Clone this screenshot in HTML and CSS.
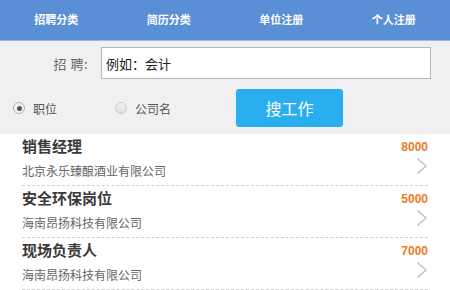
FILE: index.html
```html
<!DOCTYPE html>
<html lang="zh">
<head>
<meta charset="utf-8">
<link rel="stylesheet" href="styles.css">
</head>
<body>
<nav class="nav">
  <a class="nav-item">招聘分类</a>
  <a class="nav-item">简历分类</a>
  <a class="nav-item">单位注册</a>
  <a class="nav-item">个人注册</a>
</nav>
<section class="search">
  <div class="search-row">
    <label class="search-label">招 聘:</label>
    <div class="search-input">例如：会计</div>
  </div>
  <div class="option-row">
    <div class="option"><span class="radio checked"></span><span>职位</span></div>
    <div class="option"><span class="radio"></span><span>公司名</span></div>
    <button class="btn">搜工作</button>
  </div>
</section>
<ul class="list">
  <li class="job">
    <div class="job-main"><div class="job-title">销售经理</div><div class="job-company">北京永乐臻酿酒业有限公司</div></div>
    <div class="job-side"><span class="salary">8000</span><svg class="chev" width="12" height="18" viewBox="0 0 12 18"><path d="M1.5 1.5 L10 9 L1.5 16.5" fill="none" stroke="#c4c4c4" stroke-width="1.6"/></svg></div>
  </li>
  <li class="job">
    <div class="job-main"><div class="job-title">安全环保岗位</div><div class="job-company">海南昂扬科技有限公司</div></div>
    <div class="job-side"><span class="salary">5000</span><svg class="chev" width="12" height="18" viewBox="0 0 12 18"><path d="M1.5 1.5 L10 9 L1.5 16.5" fill="none" stroke="#c4c4c4" stroke-width="1.6"/></svg></div>
  </li>
  <li class="job">
    <div class="job-main"><div class="job-title">现场负责人</div><div class="job-company">海南昂扬科技有限公司</div></div>
    <div class="job-side"><span class="salary">7000</span><svg class="chev" width="12" height="18" viewBox="0 0 12 18"><path d="M1.5 1.5 L10 9 L1.5 16.5" fill="none" stroke="#c4c4c4" stroke-width="1.6"/></svg></div>
  </li>
</ul>
</body>
</html>
```
FILE: styles.css
```css
* { box-sizing: border-box; }
html, body { margin: 0; padding: 0; }
body {
  width: 450px;
  height: 290px;
  overflow: hidden;
  background: #fff;
  font-family: "Noto Sans CJK SC", "Noto Sans", sans-serif;
  color: #333;
}
.nav {
  display: grid;
  grid-template-columns: repeat(4, 1fr);
  height: 41px;
  background: #5b8fd5;
  border-bottom: 1px solid #9bbbe6;
}
.nav-item {
  display: flex;
  align-items: center;
  justify-content: center;
  color: #fff;
  font-size: 11px;
  font-weight: 700;
  padding-bottom: 2px;
}
.search {
  background: #f0f0f0;
  height: 93px;
  padding-top: 6px;
}
.search-row {
  display: flex;
  align-items: center;
}
.search-label {
  width: 88px;
  text-align: right;
  font-size: 13px;
  color: #666;
  letter-spacing: 0.5px;
}
.search-input {
  margin-left: 13px;
  width: 330px;
  height: 32px;
  background: #fff;
  border: 1px solid #b8b8b8;
  font-size: 13px;
  color: #222;
  padding-left: 4px;
  display: flex;
  align-items: center;
}
.option-row {
  display: flex;
  align-items: center;
  margin-top: 10px;
}
.option {
  display: flex;
  align-items: center;
  font-size: 12px;
  color: #555;
}
.option:first-child { margin-left: 13px; width: 102px; }
.option:nth-of-type(2) { width: 121px; }
.radio {
  width: 12px;
  height: 12px;
  border-radius: 50%;
  border: 1px solid #c8c8c8;
  background: linear-gradient(#f4f4f4, #dcdcdc);
  margin-right: 8px;
  position: relative;
}
.radio.checked {
  background: #f4f4f4;
  border-color: #b0b0b0;
}
.radio.checked::after {
  content: "";
  position: absolute;
  left: 2.5px;
  top: 2.5px;
  width: 5px;
  height: 5px;
  border-radius: 50%;
  background: #555;
}
.btn {
  width: 107px;
  height: 38px;
  background: #29aff0;
  border: none;
  border-radius: 3px;
  color: #fff;
  font-family: inherit;
  font-size: 16px;
  padding: 0;
}
.list {
  list-style: none;
  margin: 0;
  padding: 0 22px;
}
.job {
  display: flex;
  justify-content: space-between;
  height: 52px;
  border-bottom: 1px dashed #cfcfcf;
}
.job-main { padding-top: 1px; }
.job-title {
  font-size: 15px;
  font-weight: 700;
  color: #3a3a3a;
  line-height: 22px;
}
.job-company {
  font-size: 12px;
  color: #666;
  line-height: 18px;
  margin-top: 5px;
}
.job-side {
  display: flex;
  flex-direction: column;
  align-items: flex-end;
  padding-top: 6px;
}
.salary {
  font-family: "Liberation Sans", sans-serif;
  font-size: 12px;
  font-weight: 700;
  color: #ef7a1e;
  line-height: 14px;
}
.chev { margin-top: 3px; }
```
